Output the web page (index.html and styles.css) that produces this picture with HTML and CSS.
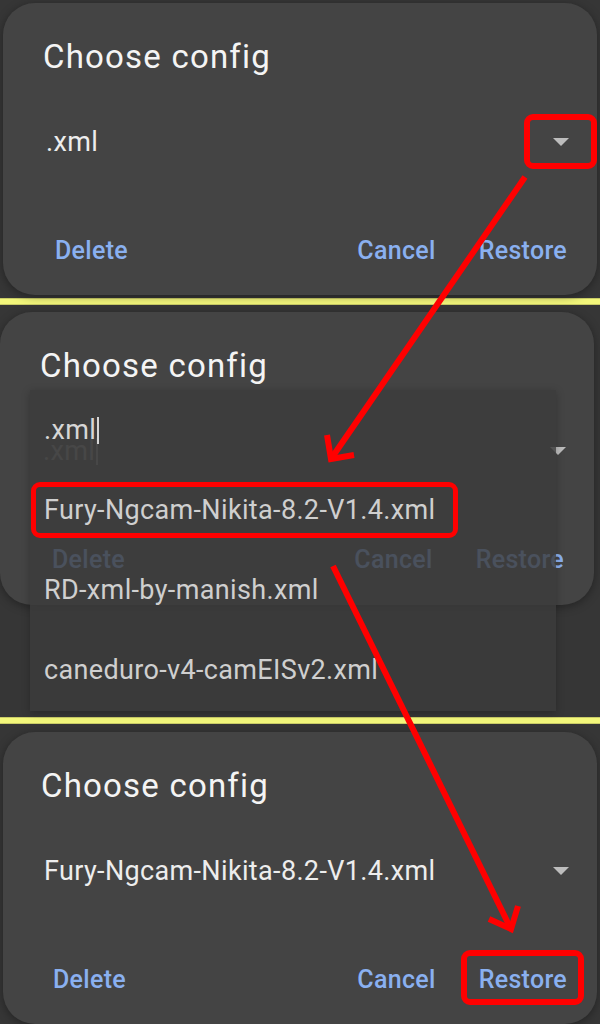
FILE: index.html
```html
<!DOCTYPE html>
<html lang="en">
<head>
<meta charset="utf-8">
<title>Choose config</title>
<link rel="stylesheet" href="styles.css">
</head>
<body>
<div class="screen">
  <section class="panel panel-top">
    <div class="card">
      <h2 class="title">Choose config</h2>
      <div class="field"><span class="value">.xml</span><span class="caret-down"></span></div>
      <div class="actions">
        <button class="btn">Delete</button>
        <span class="spacer"></span>
        <button class="btn">Cancel</button>
        <button class="btn">Restore</button>
      </div>
    </div>
  </section>
  <div class="divider"></div>
  <section class="panel panel-mid">
    <div class="card card-mid">
      <h2 class="title">Choose config</h2>
      <div class="field field-mid"><span class="value value-faded">.xml<span class="cursor"></span></span><span class="caret-down"></span></div>
      <div class="actions">
        <button class="btn">Delete</button>
        <span class="spacer"></span>
        <button class="btn">Cancel</button>
        <button class="btn">Restore</button>
      </div>
    </div>
    <ul class="popup">
      <li class="item item-input">.xml<span class="cursor"></span></li>
      <li class="item">Fury-Ngcam-Nikita-8.2-V1.4.xml</li>
      <li class="item">RD-xml-by-manish.xml</li>
      <li class="item">caneduro-v4-camEISv2.xml</li>
    </ul>
  </section>
  <div class="divider"></div>
  <section class="panel panel-bottom">
    <div class="card card-bottom">
      <h2 class="title">Choose config</h2>
      <div class="field"><span class="value">Fury-Ngcam-Nikita-8.2-V1.4.xml</span><span class="caret-down"></span></div>
      <div class="actions">
        <button class="btn">Delete</button>
        <span class="spacer"></span>
        <button class="btn">Cancel</button>
        <button class="btn">Restore</button>
      </div>
    </div>
  </section>

  <div class="mark mark-dropdown"></div>
  <div class="mark mark-item"></div>
  <div class="mark mark-restore"></div>

  <svg class="arrows" width="600" height="1024" viewBox="0 0 600 1024">
    <g fill="none" stroke="#ff0000" stroke-width="6" stroke-linejoin="miter" stroke-linecap="butt">
      <line x1="525" y1="177" x2="333" y2="456"/>
      <polyline points="327,435 331,459 354,455"/>
      <line x1="333" y1="566" x2="509" y2="925"/>
      <polyline points="518,906 511,929 489,919"/>
    </g>
  </svg>
</div>
</body>
</html>
```

FILE: styles.css
```css
* { box-sizing: border-box; }

html, body {
  margin: 0;
  padding: 0;
  background: #353535;
}

body {
  font-family: Roboto, "Noto Sans", "Liberation Sans", sans-serif;
  color: #f1f1f1;
}

.screen {
  position: relative;
  width: 600px;
  height: 1024px;
  overflow: hidden;
  display: flex;
  flex-direction: column;
}

.panel {
  position: relative;
  display: flex;
  flex-direction: column;
  background: #363636;
}

.panel-top { height: 298px; padding: 3px 3px 0; }
.panel-mid { height: 412px; padding-top: 7px; }
.panel-bottom { flex: 1; padding: 8px 3px 0; }

.divider {
  height: 7px;
  flex: none;
  background: #f3f77b;
  border-top: 1px solid #c9cc66;
  border-bottom: 1px solid #c9cc66;
}

.card {
  height: 292px;
  background: #444444;
  border-radius: 32px;
  padding: 34px 28px 0 40px;
  display: flex;
  flex-direction: column;
  box-shadow: 0 2px 10px rgba(0, 0, 0, 0.35);
}

.card-mid {
  width: 594px;
  height: 293px;
}

.card-bottom { padding-left: 38px; }

.title {
  margin: 0;
  font-size: 33px;
  font-weight: 400;
  line-height: 40px;
  color: #f4f4f4;
  letter-spacing: 1.2px;
}

.field {
  margin-top: 37px;
  height: 56px;
  display: flex;
  align-items: center;
  justify-content: space-between;
  padding-left: 3px;
}

.value {
  font-size: 27px;
  letter-spacing: 0.35px;
  color: #ededed;
  line-height: 32px;
  display: flex;
  align-items: center;
}

.value-faded { color: #7a7a7a; }

.cursor {
  display: inline-block;
  width: 2px;
  height: 27px;
  margin-left: 1px;
  background: currentColor;
}

.caret-down {
  width: 0;
  height: 0;
  border-left: 8px solid transparent;
  border-right: 8px solid transparent;
  border-top: 8px solid #bdbdbd;
}

.actions {
  margin-top: 56px;
  margin-right: -10px;
  height: 48px;
  display: flex;
  align-items: center;
  gap: 19px;
}

.spacer { flex: 1; }

.btn {
  font-family: Roboto, "Noto Sans", "Liberation Sans", sans-serif;
  font-size: 25px;
  font-weight: 500;
  letter-spacing: 0.3px;
  color: #8ab0f0;
  background: none;
  border: 0;
  padding: 0 12px;
  height: 48px;
  cursor: pointer;
}

.popup {
  position: absolute;
  left: 30px;
  top: 85px;
  width: 526px;
  height: 321px;
  margin: 0;
  padding: 0;
  list-style: none;
  background: rgba(60, 60, 60, 0.82);
  box-shadow: 0 2px 8px rgba(0, 0, 0, 0.25);
}

.item {
  height: 80px;
  display: flex;
  align-items: center;
  padding-left: 14px;
  font-size: 27px;
  letter-spacing: 0.35px;
  color: #cfcfcf;
}

.item-input {
  color: #d6d6d6;
}

.mark {
  position: absolute;
  border: 6px solid #ff0000;
  border-radius: 9px;
}

.mark-dropdown { left: 524px; top: 114px; width: 73px; height: 55px; }
.mark-item { left: 31px; top: 482px; width: 427px; height: 56px; border-width: 5px; }
.mark-restore { left: 461px; top: 950px; width: 123px; height: 55px; }

.arrows {
  position: absolute;
  left: 0;
  top: 0;
  pointer-events: none;
}
```
